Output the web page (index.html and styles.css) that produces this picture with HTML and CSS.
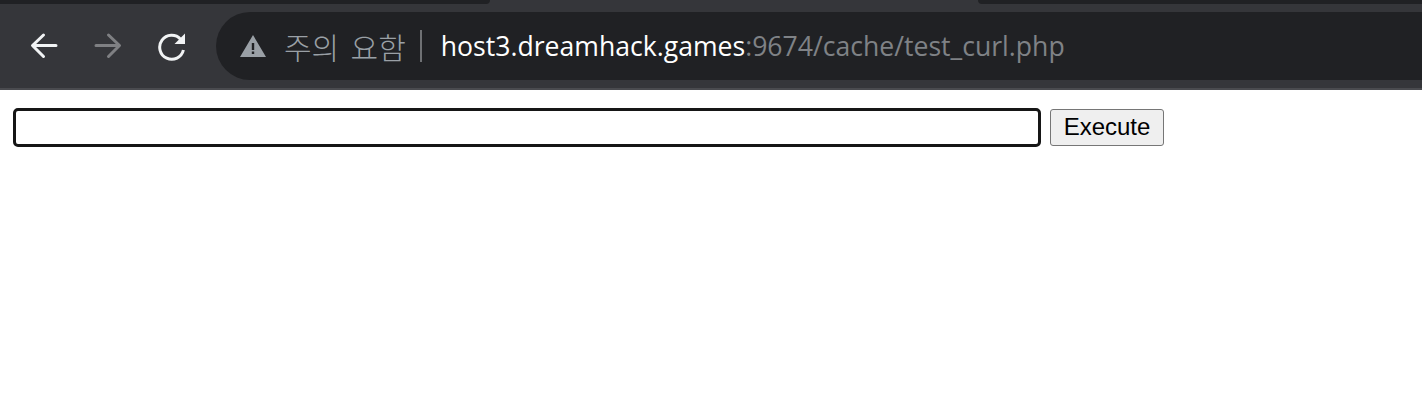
FILE: index.html
```html
<!DOCTYPE html>
<html lang="ko">
<head>
    <meta charset="UTF-8" />
    <title>test_curl</title>
    <link rel="stylesheet" href="styles.css">
</head>
<body>
    <header class="browser-bar">
        <!-- Bottom edge of the neighbouring tabs -->
        <div class="tab-strip">
            <div class="tab-edge tab-left"></div>
            <div class="tab-edge tab-right"></div>
        </div>
        <div class="toolbar">
            <svg class="nav-icon nav-back" viewBox="0 0 32 32">
                <path d="M28 15.5H5M15.5 5L4.5 15.5l11 11" />
            </svg>
            <svg class="nav-icon nav-forward" viewBox="0 0 32 32">
                <path d="M4 15.5h23M16.5 5l11 10.5-11 11" />
            </svg>
            <svg class="nav-icon nav-reload" viewBox="0 0 32 32">
                <path d="M24.6 9.2A12 12 0 1 0 27.4 20" />
                <path class="solid" d="M29 3.5V14H18.5z" />
            </svg>
            <div class="omnibox">
                <svg class="warn-icon" viewBox="0 0 26 24">
                    <path fill-rule="evenodd" d="M13 1L26 23H0zM11.8 9v7h2.4V9zM11.8 17.5V20h2.4v-2.5z" />
                </svg>
                <span class="warn-text">주의 요함</span>
                <span class="divider"></span>
                <span class="url"><span class="url-host">host3.dreamhack.games</span>:9674/cache/test_curl.php</span>
            </div>
        </div>
    </header>

    <form class="curl-form">
        <input type="text" class="curl-input" />
        <button type="button" class="curl-button">Execute</button>
    </form>
</body>
</html>
```

FILE: styles.css
```css
body {
    margin: 0;
    background-color: #fff;
    overflow: hidden;
}

.browser-bar {
    height: 88px;
    background-color: #35363a;
    border-bottom: 2px solid #4a4b4f;
}

.tab-strip {
    display: flex;
    justify-content: space-between;
    height: 4px;
}

.tab-edge {
    background-color: #202124;
    border-radius: 0 0 8px 8px;
}

.tab-left {
    width: 490px;
    border-bottom-left-radius: 0;
}

.tab-right {
    width: 444px;
    border-bottom-right-radius: 0;
}

.toolbar {
    display: flex;
    align-items: center;
    height: 68px;
    margin-top: 8px;
    padding-left: 28px;
}

.nav-icon {
    width: 32px;
    height: 32px;
    flex-shrink: 0;
    margin-right: 32px;
    fill: none;
    stroke: #f1f3f4;
    stroke-width: 3;
    stroke-linecap: round;
    stroke-linejoin: round;
}

.nav-forward {
    stroke: #7f8083;
}

.nav-reload {
    margin-right: 28px;
}

.nav-reload path {
    stroke-linecap: butt;
}

.nav-reload .solid {
    fill: #f1f3f4;
    stroke: none;
}

.omnibox {
    display: flex;
    align-items: center;
    flex: 1;
    height: 68px;
    padding-left: 24px;
    background-color: #202124;
    border-radius: 34px 0 0 34px;
}

.warn-icon {
    width: 26px;
    height: 24px;
    fill: #9aa0a6;
    flex-shrink: 0;
}

.warn-text {
    margin-left: 18px;
    font-family: "Noto Sans CJK KR", sans-serif;
    font-weight: 300;
    font-size: 30px;
    word-spacing: 3px;
    color: #9aa0a6;
    white-space: nowrap;
}

.divider {
    width: 2px;
    height: 32px;
    margin: 0 19px 0 14px;
    background-color: #6f7174;
}

.url {
    font-family: "Open Sans", sans-serif;
    font-size: 26.6px;
    color: #7f8286;
    white-space: nowrap;
}

.url-host {
    color: #fff;
}

.curl-form {
    display: flex;
    align-items: center;
    height: 39px;
    margin: 18px 0 0 13px;
}

.curl-input {
    box-sizing: border-box;
    width: 1028px;
    height: 39px;
    padding: 0;
    border: 3px solid #161616;
    border-radius: 5px;
    outline: none;
    background-color: #fff;
}

.curl-button {
    box-sizing: border-box;
    width: 114px;
    height: 37px;
    margin-left: 9px;
    padding: 0 0 2px;
    border: 1px solid #767676;
    border-radius: 3px;
    background-color: #efefef;
    font-family: "Liberation Sans", sans-serif;
    font-size: 24px;
    color: #000;
}
```
